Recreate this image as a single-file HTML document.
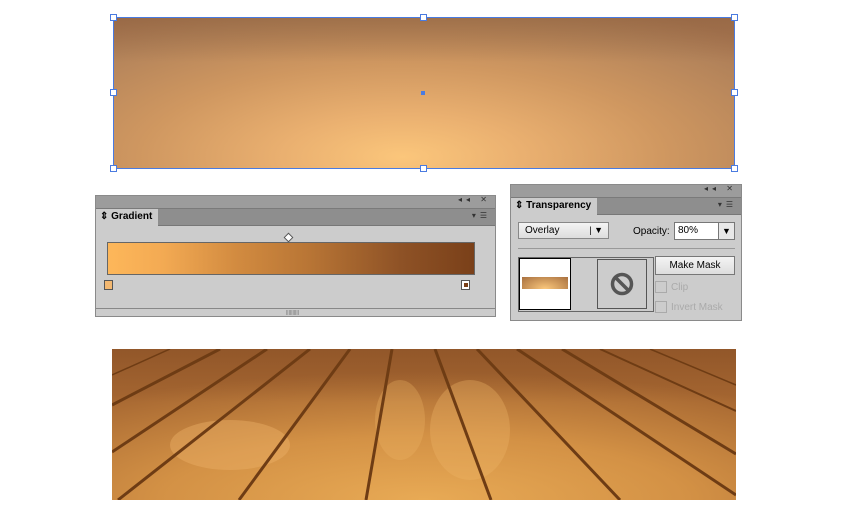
<!DOCTYPE html>
<html><head><style>
body{margin:0;width:850px;height:520px;background:#fff;position:relative;overflow:hidden;font-family:"Liberation Sans",sans-serif;font-size:10px;color:#000}
.abs{position:absolute}
.h{width:5px;height:5px;background:#fff;border:1px solid #4a7be0;position:absolute}
.panel{position:absolute;background:#cccccc;border:1px solid #8a8a8a;box-sizing:border-box}
.top{height:12px;background:#9c9c9c;border-bottom:1px solid #7a7a7a;position:relative}
.tabrow{height:16px;background:#8e8e8e;position:relative;border-bottom:1px solid #777}
.tab{position:absolute;left:0;top:0;height:17px;background:#cccccc;font-weight:bold;padding:0 6px 0 4px;line-height:16px;font-size:10px}
.ctl{position:absolute;right:4px;top:-1px;font-size:8px;color:#333;letter-spacing:4px}
</style></head><body>
<div class="abs" style="left:113px;top:17px;width:621px;height:151px;background:radial-gradient(ellipse 480px 170px at 290px 140px,#fbc67b 0%,#eab070 25%,#cf9760 55%,#b3835a 85%,#a87652 100%);"></div>
<div class="abs" style="left:113px;top:17px;width:621px;height:45px;background:linear-gradient(rgba(140,95,60,.55),rgba(150,100,65,0))"></div>
<div class="abs" style="left:113px;top:17px;width:620px;height:150px;border:1px solid #4a7be0"></div>
<div class="h" style="left:110px;top:14px"></div><div class="h" style="left:420px;top:14px"></div><div class="h" style="left:731px;top:14px"></div>
<div class="h" style="left:110px;top:89px"></div><div class="h" style="left:731px;top:89px"></div>
<div class="h" style="left:110px;top:165px"></div><div class="h" style="left:420px;top:165px"></div><div class="h" style="left:731px;top:165px"></div>
<div class="abs" style="left:421px;top:91px;width:4px;height:4px;background:#4a7be0"></div>

<div class="panel" style="left:95px;top:195px;width:401px;height:122px">
<div class="top"><span class="ctl">◂◂ ✕</span></div>
<div class="tabrow"><div class="tab">⇕ Gradient</div><span class="ctl" style="top:2px">▾☰</span></div>
<div class="abs" style="left:189px;top:38px;width:5px;height:5px;border:1px solid #555;background:#fff;transform:rotate(45deg)"></div>
<div class="abs" style="left:11px;top:46px;width:366px;height:31px;border:1px solid #666;background:linear-gradient(90deg,#fdb75a 0%,#f3aa53 15%,#d28b40 35%,#b87535 55%,#8e5226 80%,#7a4019 100%)"></div>
<div class="abs" style="left:8px;top:84px;width:7px;height:8px;border:1px solid #555;background:#f3b871"></div>
<div class="abs" style="left:365px;top:84px;width:7px;height:8px;border:1px solid #555;background:#fff"><div style="margin:2px;width:4px;height:4px;background:#7a4019"></div></div>
<div class="abs" style="left:0;top:112px;width:399px;height:1px;background:#888"></div>
<div class="abs" style="left:190px;top:114px;font-size:5px;color:#666">||||||||||</div>
</div>

<div class="panel" style="left:510px;top:184px;width:232px;height:137px">
<div class="top"><span class="ctl">◂◂ ✕</span></div>
<div class="tabrow"><div class="tab">⇕ Transparency</div><span class="ctl" style="top:2px">▾☰</span></div>
<div class="abs" style="left:7px;top:37px;width:91px;height:17px;border:1px solid #888;background:linear-gradient(#f4f4f4,#ddd);box-sizing:border-box;line-height:15px;padding-left:6px">Overlay<span style="position:absolute;right:5px;top:0;font-size:9px">| ▼</span></div>
<div class="abs" style="left:122px;top:41px">Opacity:</div>
<div class="abs" style="left:163px;top:37px;width:61px;height:18px;border:1px solid #777;background:#fff;box-sizing:border-box;line-height:16px;padding-left:3px">80%<span style="position:absolute;right:0;top:0;width:15px;height:16px;background:#e8e8e8;border-left:1px solid #777;text-align:center;font-size:9px">▼</span></div>
<div class="abs" style="left:7px;top:63px;width:217px;height:1px;background:#999"></div>
<div class="abs" style="left:7px;top:72px;width:134px;height:53px;border:1px solid #666"></div>
<div class="abs" style="left:8px;top:73px;width:50px;height:50px;border:1px solid #000;background:#fff"><div style="margin-top:18px;margin-left:2px;width:46px;height:12px;background:radial-gradient(ellipse at 50% 100%,#fbc87d,#a8703f)"></div></div>
<div class="abs" style="left:86px;top:74px;width:48px;height:48px;border:1px solid #555;display:flex;align-items:center;justify-content:center"><svg width="24" height="24"><circle cx="12" cy="12" r="9.5" fill="none" stroke="#555" stroke-width="3.5"/><line x1="5.5" y1="5.5" x2="18.5" y2="18.5" stroke="#555" stroke-width="3.5"/></svg></div>
<div class="abs" style="left:144px;top:71px;width:80px;height:19px;border:1px solid #777;background:linear-gradient(#f4f4f4,#ddd);box-sizing:border-box;text-align:center;line-height:17px">Make Mask</div>
<div class="abs" style="left:144px;top:96px;width:10px;height:10px;border:1px solid #aaa"></div><div class="abs" style="left:160px;top:97px;color:#aaa">Clip</div>
<div class="abs" style="left:144px;top:116px;width:10px;height:10px;border:1px solid #aaa"></div><div class="abs" style="left:160px;top:117px;color:#aaa">Invert Mask</div>
</div>

<svg class="abs" style="left:112px;top:349px" width="624" height="151" viewBox="112 349 624 151">
<defs><radialGradient id="w" cx="0.5" cy="1" r="0.85"><stop offset="0" stop-color="#e8aa55"/><stop offset="0.5" stop-color="#d39145"/><stop offset="1" stop-color="#a56631"/></radialGradient>
<linearGradient id="t" x1="0" y1="0" x2="0" y2="1"><stop offset="0" stop-color="#7a4420" stop-opacity=".45"/><stop offset=".35" stop-color="#7a4420" stop-opacity="0"/></linearGradient></defs>
<rect x="112" y="349" width="624" height="151" fill="url(#w)"/>
<rect x="112" y="349" width="624" height="151" fill="url(#t)"/>
<ellipse cx="230" cy="445" rx="60" ry="25" fill="#ebb065" opacity=".45"/>
<ellipse cx="470" cy="430" rx="40" ry="50" fill="#eeb566" opacity=".35"/>
<ellipse cx="400" cy="420" rx="25" ry="40" fill="#eeb566" opacity=".3"/>
<g stroke="#6e3c14" stroke-width="3" fill="none">
<line x1="392" y1="349" x2="366" y2="500"/><line x1="435" y1="349" x2="491" y2="500"/>
<line x1="350" y1="349" x2="239" y2="500"/><line x1="310" y1="349" x2="118" y2="500"/>
<line x1="477" y1="349" x2="620" y2="500"/><line x1="517" y1="349" x2="736" y2="495"/>
<line x1="267" y1="349" x2="112" y2="452"/><line x1="220" y1="349" x2="112" y2="405"/>
<line x1="562" y1="349" x2="736" y2="454"/><line x1="600" y1="349" x2="736" y2="411" stroke-width="2"/>
<line x1="650" y1="349" x2="736" y2="385" stroke-width="1.5"/><line x1="170" y1="349" x2="112" y2="375" stroke-width="1.5"/>
</g></svg>
</body></html>
